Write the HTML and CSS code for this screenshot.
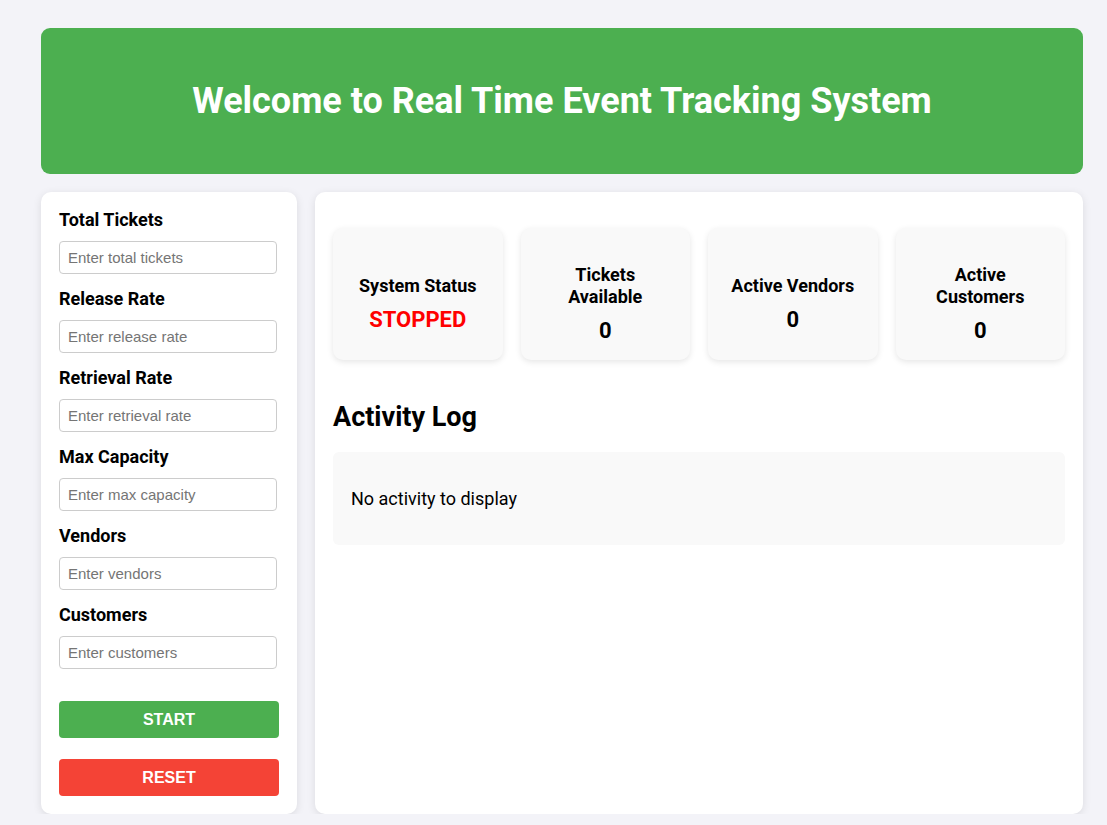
FILE: index.html
```html
<!DOCTYPE html>
<html lang="en">
<head>
<meta charset="utf-8">
<title>Real Time Event Tracking System</title>
<link rel="stylesheet" href="styles.css">
</head>
<body>
<div class="app">
  <header class="banner">
    <h1>Welcome to Real Time Event Tracking System</h1>
  </header>
  <div class="layout">
    <aside class="sidebar">
      <label class="field-label" for="total">Total Tickets</label>
      <input class="field" id="total" type="text" placeholder="Enter total tickets">
      <label class="field-label" for="release">Release Rate</label>
      <input class="field" id="release" type="text" placeholder="Enter release rate">
      <label class="field-label" for="retrieval">Retrieval Rate</label>
      <input class="field" id="retrieval" type="text" placeholder="Enter retrieval rate">
      <label class="field-label" for="max">Max Capacity</label>
      <input class="field" id="max" type="text" placeholder="Enter max capacity">
      <label class="field-label" for="vendors">Vendors</label>
      <input class="field" id="vendors" type="text" placeholder="Enter vendors">
      <label class="field-label" for="customers">Customers</label>
      <input class="field" id="customers" type="text" placeholder="Enter customers">
      <button class="btn btn-start">START</button>
      <button class="btn btn-reset">RESET</button>
    </aside>
    <main class="panel">
      <div class="stats">
        <div class="stat">
          <div class="stat-label">System Status</div>
          <div class="stat-value stopped">STOPPED</div>
        </div>
        <div class="stat">
          <div class="stat-label">Tickets Available</div>
          <div class="stat-value">0</div>
        </div>
        <div class="stat">
          <div class="stat-label">Active Vendors</div>
          <div class="stat-value">0</div>
        </div>
        <div class="stat">
          <div class="stat-label">Active Customers</div>
          <div class="stat-value">0</div>
        </div>
      </div>
      <h2 class="log-title">Activity Log</h2>
      <div class="log">
        <p class="log-empty">No activity to display</p>
      </div>
    </main>
  </div>
</div>
</body>
</html>
```

FILE: styles.css
```css
* { box-sizing: border-box; }

html, body {
  margin: 0;
  background: #f3f3f8;
}

body {
  font-family: Roboto, "Liberation Sans", Arial, sans-serif;
  color: #000;
  padding: 28px 24px 0 41px;
}

.banner {
  background: #4caf50;
  border-radius: 9px;
  height: 146px;
  display: flex;
  align-items: center;
  justify-content: center;
}

.banner h1 {
  margin: 0;
  color: #fff;
  font-size: 36px;
  font-weight: 700;
}

.layout {
  display: flex;
  gap: 18px;
  margin-top: 18px;
  align-items: stretch;
}

.sidebar {
  width: 256px;
  flex: none;
  background: #fff;
  border-radius: 10px;
  box-shadow: 0 2px 8px rgba(0, 0, 0, 0.1);
  padding: 17px 18px 18px;
  display: flex;
  flex-direction: column;
}

.field-label {
  font-size: 18px;
  font-weight: 700;
  line-height: 22px;
  margin-bottom: 10px;
}

.field {
  width: calc(100% - 2px);
  height: 33px;
  border: 1px solid #ccc;
  border-radius: 4px;
  padding: 0 8px;
  font-family: "Liberation Sans", Arial, sans-serif;
  font-size: 15px;
  margin-bottom: 14px;
  background: #fff;
}

.field::placeholder {
  color: #757575;
}

.btn {
  width: 100%;
  height: 37px;
  border: none;
  border-radius: 4px;
  color: #fff;
  font-family: "Liberation Sans", Arial, sans-serif;
  font-size: 16px;
  font-weight: 700;
  cursor: pointer;
}

.btn-start {
  background: #4caf50;
  margin-top: 18px;
}

.btn-reset {
  background: #f44336;
  margin-top: 21px;
}

.panel {
  flex: 1;
  background: #fff;
  border-radius: 10px;
  box-shadow: 0 2px 8px rgba(0, 0, 0, 0.1);
  padding: 36px 18px 18px;
}

.stats {
  display: grid;
  grid-template-columns: repeat(4, 1fr);
  gap: 18px;
}

.stat {
  background: #f9f9f9;
  border-radius: 10px;
  box-shadow: 0 2px 6px rgba(0, 0, 0, 0.1);
  padding: 36px 20px 15px;
  display: flex;
  flex-direction: column;
  align-items: center;
  justify-content: center;
  text-align: center;
  min-height: 132px;
}

.stat-label {
  font-size: 18px;
  font-weight: 700;
  line-height: 22px;
}

.stat-value {
  margin-top: 9px;
  font-size: 22px;
  font-weight: 700;
  line-height: 28px;
}

.stopped {
  color: #ff0000;
}

.log-title {
  margin: 42px 0 20px;
  font-size: 27px;
  font-weight: 700;
  line-height: 30px;
}

.log {
  background: #f9f9f9;
  border-radius: 6px;
  padding: 18px;
}

.log-empty {
  margin: 18px 0;
  font-size: 18px;
  line-height: 21px;
}
```
